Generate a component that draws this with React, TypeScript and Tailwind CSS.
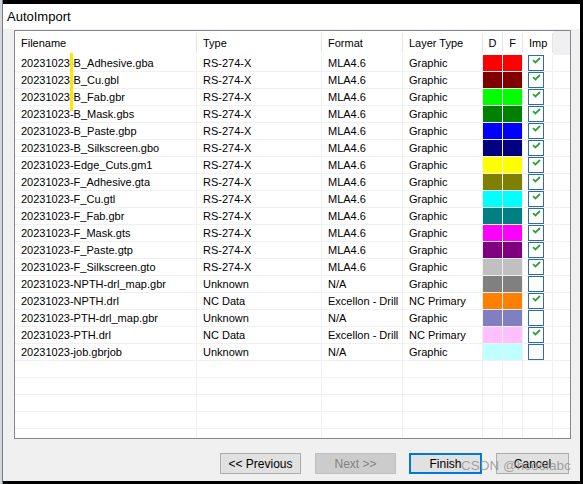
import { Fragment } from "react";

type Row = {
  name: string;
  type: string;
  format: string;
  layer: string;
  color: string;
  imp: boolean;
};

const rows: Row[] = [
  { name: "20231023-B_Adhesive.gba", type: "RS-274-X", format: "MLA4.6", layer: "Graphic", color: "#ff0000", imp: true },
  { name: "20231023-B_Cu.gbl", type: "RS-274-X", format: "MLA4.6", layer: "Graphic", color: "#800000", imp: true },
  { name: "20231023-B_Fab.gbr", type: "RS-274-X", format: "MLA4.6", layer: "Graphic", color: "#00ff00", imp: true },
  { name: "20231023-B_Mask.gbs", type: "RS-274-X", format: "MLA4.6", layer: "Graphic", color: "#008000", imp: true },
  { name: "20231023-B_Paste.gbp", type: "RS-274-X", format: "MLA4.6", layer: "Graphic", color: "#0000ff", imp: true },
  { name: "20231023-B_Silkscreen.gbo", type: "RS-274-X", format: "MLA4.6", layer: "Graphic", color: "#000080", imp: true },
  { name: "20231023-Edge_Cuts.gm1", type: "RS-274-X", format: "MLA4.6", layer: "Graphic", color: "#ffff00", imp: true },
  { name: "20231023-F_Adhesive.gta", type: "RS-274-X", format: "MLA4.6", layer: "Graphic", color: "#808000", imp: true },
  { name: "20231023-F_Cu.gtl", type: "RS-274-X", format: "MLA4.6", layer: "Graphic", color: "#00ffff", imp: true },
  { name: "20231023-F_Fab.gbr", type: "RS-274-X", format: "MLA4.6", layer: "Graphic", color: "#008080", imp: true },
  { name: "20231023-F_Mask.gts", type: "RS-274-X", format: "MLA4.6", layer: "Graphic", color: "#ff00ff", imp: true },
  { name: "20231023-F_Paste.gtp", type: "RS-274-X", format: "MLA4.6", layer: "Graphic", color: "#800080", imp: true },
  { name: "20231023-F_Silkscreen.gto", type: "RS-274-X", format: "MLA4.6", layer: "Graphic", color: "#c0c0c0", imp: true },
  { name: "20231023-NPTH-drl_map.gbr", type: "Unknown", format: "N/A", layer: "Graphic", color: "#808080", imp: false },
  { name: "20231023-NPTH.drl", type: "NC Data", format: "Excellon - Drill", layer: "NC Primary", color: "#ff8000", imp: true },
  { name: "20231023-PTH-drl_map.gbr", type: "Unknown", format: "N/A", layer: "Graphic", color: "#8080c0", imp: false },
  { name: "20231023-PTH.drl", type: "NC Data", format: "Excellon - Drill", layer: "NC Primary", color: "#ffc0ff", imp: true },
  { name: "20231023-job.gbrjob", type: "Unknown", format: "N/A", layer: "Graphic", color: "#c0ffff", imp: false },
];

function CheckBox({ checked }: { checked: boolean }) {
  return (
    <div className="relative w-[16px] h-[16px] border border-[#2f6ca8] bg-white">
      {checked && (
        <svg className="absolute left-[3px] top-[1px]" width="9" height="7" viewBox="0 0 9 7">
          <path d="M1 3.2 L3.4 5.5 L8 1" fill="none" stroke="#35a03a" strokeWidth="1.8" />
        </svg>
      )}
    </div>
  );
}

function HeadCell({ w, label, center }: { w: string; label: string; center?: boolean }) {
  return (
    <div className={`${w} flex h-full bg-white`}>
      <div className={`flex-1 flex items-center ${center ? "justify-center" : "pl-[6px]"}`}>{label}</div>
      <div className="w-px my-[2px] bg-[#e5e5e5]" />
    </div>
  );
}

function Button({ label, w, kind }: { label: string; w: string; kind?: "disabled" | "default" }) {
  const look =
    kind === "disabled"
      ? "bg-[#cccccc] border border-[#bfbfbf] text-[#838383]"
      : kind === "default"
        ? "bg-[#e1e1e1] border-2 border-[#0078d7] text-black"
        : "bg-[#e1e1e1] border border-[#adadad] text-black";
  return (
    <div className={`${w} h-[21px] flex items-center justify-center text-[12px] ${look}`}>{label}</div>
  );
}

const cell = "border-r border-[#f0f0f0]";

export default function App() {
  return (
    <div className="relative w-[583px] h-[484px] bg-black flex overflow-hidden font-['Liberation_Sans',Arial,sans-serif] text-[11px] text-black">
      <div className="w-[2px] h-full bg-[#d6d6d6]" />
      <div className="w-px h-full bg-[#6f7f90]" />
      <div className="flex-1 mt-[4px] mr-[3px] h-[477px] flex flex-col">
        <div className="h-[25px] bg-white pl-[4px] flex items-center text-[13px]">AutoImport</div>
        <div className="flex-1 bg-[#f0f0f0] pt-[1px] pl-[11px] flex flex-col">
          {/* list view */}
          <div className="w-[557px] h-[409px] border border-[#828790] bg-white overflow-hidden">
            <div className="flex h-[24px] bg-[#f0f0f0]">
              <HeadCell w="w-[182px]" label="Filename" />
              <HeadCell w="w-[125px]" label="Type" />
              <HeadCell w="w-[81px]" label="Format" />
              <HeadCell w="w-[80px]" label="Layer Type" />
              <HeadCell w="w-[20px]" label="D" center />
              <HeadCell w="w-[20px]" label="F" center />
              <HeadCell w="w-[30px]" label="Imp" />
            </div>
            {rows.map((r) => (
              <div key={r.name} className="flex h-[17px] border-b border-[#f0f0f0] leading-[17px]">
                <div className={`w-[182px] pl-[6px] ${cell}`}>{r.name}</div>
                <div className={`w-[125px] pl-[6px] ${cell}`}>{r.type}</div>
                <div className={`w-[81px] pl-[6px] whitespace-nowrap ${cell}`}>{r.format}</div>
                <div className={`w-[80px] pl-[6px] ${cell}`}>{r.layer}</div>
                <div className={`w-[20px] ${cell}`} style={{ backgroundColor: r.color }} />
                <div className={`w-[20px] ${cell}`} style={{ backgroundColor: r.color }} />
                <div className={`w-[30px] pl-[5px] ${cell}`}>
                  <CheckBox checked={r.imp} />
                </div>
              </div>
            ))}
            {[0, 1, 2, 3, 4, 5].map((i) => (
              <Fragment key={i}>
                <div className="flex h-[17px] border-b border-[#f0f0f0]">
                  <div className={`w-[182px] ${cell}`} />
                  <div className={`w-[125px] ${cell}`} />
                  <div className={`w-[81px] ${cell}`} />
                  <div className={`w-[80px] ${cell}`} />
                  <div className={`w-[20px] ${cell}`} />
                  <div className={`w-[20px] ${cell}`} />
                  <div className={`w-[30px] ${cell}`} />
                </div>
              </Fragment>
            ))}
          </div>
          <div className="flex mt-[14px] ml-[206px] gap-[14px]">
            <Button w="w-[81px]" label="<< Previous" />
            <Button w="w-[81px] mr-[-1px]" label="Next >>" kind="disabled" />
            <Button w="w-[73px]" label="Finish" kind="default" />
            <Button w="w-[73px]" label="Cancel" />
          </div>
        </div>
      </div>

      {/* yellow highlight marker */}
      <div className="absolute left-[70px] top-[53px] w-[3px] h-[58px] bg-[#ffe600]" />
      {/* watermark */}
      <div className="absolute left-[461px] top-[458px] whitespace-nowrap text-[13.5px] leading-[16px] text-[#8f8f8f]/80">
        CSDN @hcoolabc
      </div>
    </div>
  );
}
